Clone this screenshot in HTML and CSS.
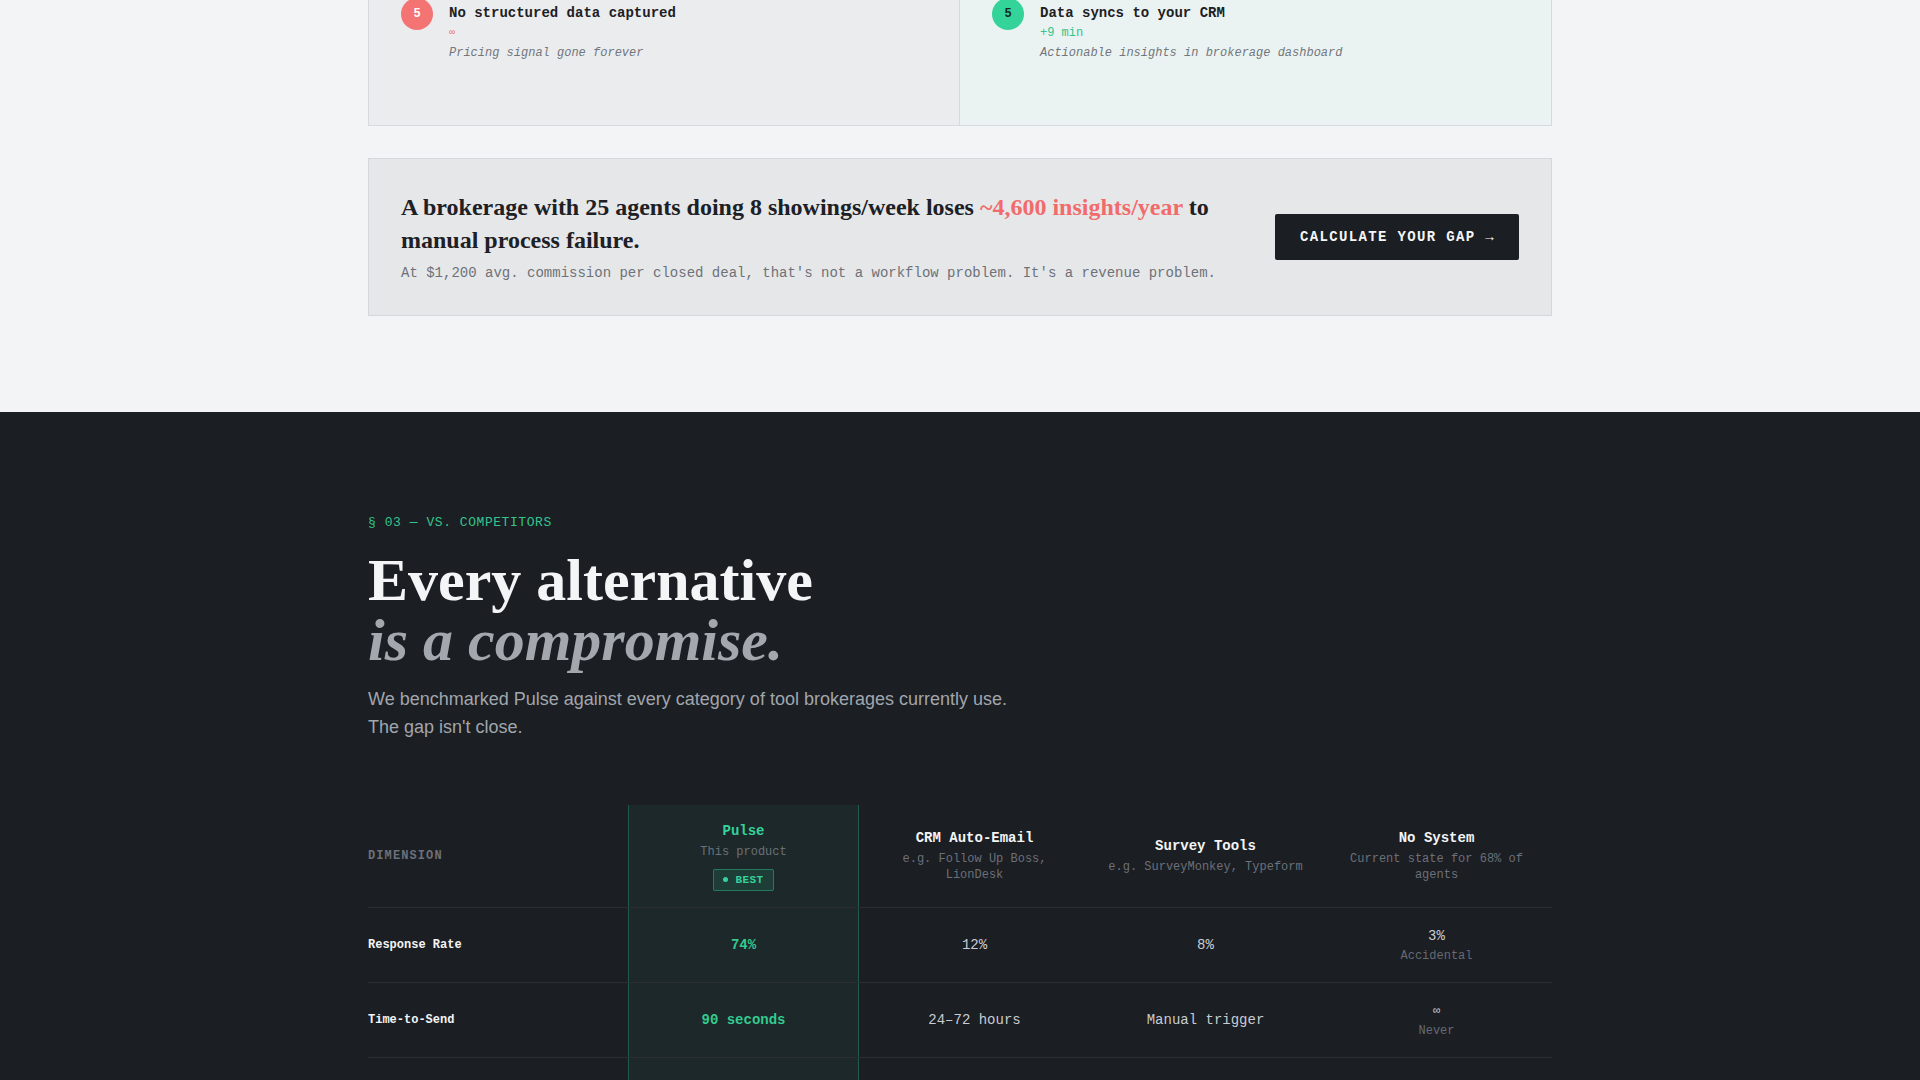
FILE: index.html
```html
<!DOCTYPE html>
<html lang="en">
<head>
<meta charset="utf-8">
<title>Pulse — Comparison</title>
<link rel="stylesheet" href="styles.css">
</head>
<body>
<section class="problem">
  <div class="container">
    <div class="flow">
      <div class="flow-col flow-manual">
        <div class="step">
          <span class="step-num num-bad">5</span>
          <div class="step-body">
            <div class="step-title">No structured data captured</div>
            <div class="step-time time-bad">∞</div>
            <div class="step-desc">Pricing signal gone forever</div>
          </div>
        </div>
      </div>
      <div class="flow-col flow-pulse">
        <div class="step">
          <span class="step-num num-good">5</span>
          <div class="step-body">
            <div class="step-title">Data syncs to your CRM</div>
            <div class="step-time time-good">+9 min</div>
            <div class="step-desc">Actionable insights in brokerage dashboard</div>
          </div>
        </div>
      </div>
    </div>

    <div class="callout">
      <div class="callout-text">
        <h3 class="callout-title">A brokerage with 25 agents doing 8 showings/week loses <span class="loss">~4,600 insights/year</span> to manual process failure.</h3>
        <p class="callout-sub">At $1,200 avg. commission per closed deal, that's not a workflow problem. It's a revenue problem.</p>
      </div>
      <a class="btn-dark" href="#">Calculate your gap →</a>
    </div>
  </div>
</section>

<section class="competitors">
  <div class="container">
    <div class="eyebrow">§ 03 — VS. COMPETITORS</div>
    <h2 class="headline">Every alternative<br><em>is a compromise.</em></h2>
    <p class="lede">We benchmarked Pulse against every category of tool brokerages currently use.<br>The gap isn't close.</p>

    <div class="cmp">
      <div class="cmp-row cmp-head">
        <div class="cmp-cell cmp-dim"><span class="dim-label">DIMENSION</span></div>
        <div class="cmp-cell cmp-pulse">
          <div class="col-name col-name-pulse">Pulse</div>
          <div class="col-sub">This product</div>
          <span class="badge-best"><span class="badge-dot"></span>BEST</span>
        </div>
        <div class="cmp-cell">
          <div class="col-name">CRM Auto-Email</div>
          <div class="col-sub">e.g. Follow Up Boss, LionDesk</div>
        </div>
        <div class="cmp-cell">
          <div class="col-name">Survey Tools</div>
          <div class="col-sub">e.g. SurveyMonkey, Typeform</div>
        </div>
        <div class="cmp-cell">
          <div class="col-name">No System</div>
          <div class="col-sub">Current state for 68% of agents</div>
        </div>
      </div>

      <div class="cmp-row">
        <div class="cmp-cell cmp-dim"><span class="row-label">Response Rate</span></div>
        <div class="cmp-cell cmp-pulse"><span class="val-win">74%</span></div>
        <div class="cmp-cell"><span class="val">12%</span></div>
        <div class="cmp-cell"><span class="val">8%</span></div>
        <div class="cmp-cell"><span class="val">3%</span><span class="val-note">Accidental</span></div>
      </div>

      <div class="cmp-row">
        <div class="cmp-cell cmp-dim"><span class="row-label">Time-to-Send</span></div>
        <div class="cmp-cell cmp-pulse"><span class="val-win">90 seconds</span></div>
        <div class="cmp-cell"><span class="val">24–72 hours</span></div>
        <div class="cmp-cell"><span class="val">Manual trigger</span></div>
        <div class="cmp-cell"><span class="val val-inf">∞</span><span class="val-note">Never</span></div>
      </div>

      <div class="cmp-row">
        <div class="cmp-cell cmp-dim"><span class="row-label">Data Structure</span></div>
        <div class="cmp-cell cmp-pulse"><span class="val-win">Structured</span></div>
        <div class="cmp-cell"><span class="val">Free text</span></div>
        <div class="cmp-cell"><span class="val">Generic</span></div>
        <div class="cmp-cell"><span class="val">None</span></div>
      </div>
    </div>
  </div>
</section>
</body>
</html>
```

FILE: styles.css
```css
* { box-sizing: border-box; }

html, body {
  margin: 0;
  padding: 0;
}

body {
  background: #f3f4f6;
  color: #1f2328;
  font-family: "Liberation Sans", Arial, sans-serif;
}

.container {
  width: 1184px;
  margin: 0 auto;
}

/* ---------- light problem section ---------- */
.problem {
  background: #f3f4f6;
  padding-bottom: 96px;
}

.flow {
  display: grid;
  grid-template-columns: 1fr 1fr;
  border: 1px solid #d7d9dc;
  margin-top: -35px;
}

.flow-col {
  padding: 32px 32px 64px;
}

.flow-manual {
  background: #ebecee;
  border-right: 1px solid #d7d9dc;
}

.flow-pulse {
  background: #ebf3f2;
}

.step {
  display: flex;
  align-items: flex-start;
  gap: 16px;
}

.step-num {
  flex: 0 0 32px;
  width: 32px;
  height: 32px;
  border-radius: 50%;
  display: flex;
  align-items: center;
  justify-content: center;
  font-family: "Liberation Mono", "DejaVu Sans Mono", monospace;
  font-weight: 700;
  font-size: 12px;
}

.num-bad { background: #f47373; color: #ffffff; }
.num-good { background: #34d399; color: #12261f; }

.step-body {
  padding-top: 5px;
  font-family: "Liberation Mono", "DejaVu Sans Mono", monospace;
}

.step-title {
  font-size: 14px;
  line-height: 20px;
  font-weight: 700;
  color: #1d2024;
}

.step-time {
  margin-top: 2px;
  font-size: 12px;
  line-height: 16px;
}

.time-bad { color: #f07a7a; font-size: 10px; }
.time-good { color: #2fc58c; }

.step-desc {
  margin-top: 4px;
  font-size: 12px;
  line-height: 16px;
  font-style: italic;
  color: #72767d;
}

.callout {
  margin-top: 32px;
  background: #e6e7e9;
  border: 1px solid #d5d7da;
  padding: 32px;
  display: flex;
  align-items: center;
  gap: 40px;
}

.callout-text {
  flex: 1;
  min-width: 0;
}

.callout-title {
  margin: 0;
  font-family: "Liberation Serif", "Times New Roman", serif;
  font-weight: 700;
  font-size: 24px;
  line-height: 33px;
  color: #1d2024;
}

.loss { color: #f26b6b; }

.callout-sub {
  margin: 6px 0 0;
  font-family: "Liberation Mono", "DejaVu Sans Mono", monospace;
  font-size: 14px;
  line-height: 20px;
  color: #6e7278;
}

.btn-dark {
  flex: 0 0 auto;
  display: inline-block;
  background: #1b1e22;
  color: #f4f5f7;
  text-decoration: none;
  text-transform: uppercase;
  font-family: "Liberation Mono", "DejaVu Sans Mono", monospace;
  font-weight: 700;
  font-size: 14px;
  line-height: 16px;
  letter-spacing: 1.35px;
  padding: 15px 24px 15px 25px;
  border-radius: 2px;
}

/* ---------- dark competitors section ---------- */
.competitors {
  background: #1b1e22;
  color: #f3f4f6;
  padding: 103px 0 96px;
}

.eyebrow {
  font-family: "Liberation Mono", "DejaVu Sans Mono", monospace;
  font-size: 13px;
  line-height: 16px;
  letter-spacing: 0.55px;
  color: #34c48e;
}

.headline {
  margin: 19px 0 0;
  font-family: "Liberation Serif", "Times New Roman", serif;
  font-weight: 700;
  font-size: 60px;
  line-height: 60px;
  color: #f4f5f7;
}

.headline em {
  font-style: italic;
  color: #a3a7ae;
}

.lede {
  margin: 16px 0 0;
  font-family: "Liberation Sans", Arial, sans-serif;
  font-size: 18px;
  line-height: 27.5px;
  color: #a1a6ad;
}

/* ---------- comparison table ---------- */
.cmp {
  margin-top: 64px;
  font-family: "Liberation Mono", "DejaVu Sans Mono", monospace;
}

.cmp-row {
  display: grid;
  grid-template-columns: 260px repeat(4, 1fr);
  min-height: 75px;
  border-bottom: 1px solid #2b2f35;
}

.cmp-cell {
  display: flex;
  flex-direction: column;
  align-items: center;
  justify-content: center;
  text-align: center;
  padding: 0 16px;
}

.cmp-dim {
  align-items: flex-start;
  text-align: left;
  padding: 0;
}

.cmp-pulse {
  background: rgba(52, 211, 153, 0.06);
  border-left: 1px solid rgba(52, 211, 153, 0.3);
  border-right: 1px solid rgba(52, 211, 153, 0.3);
}

.cmp-head .cmp-pulse {
  padding-top: 16px;
  padding-bottom: 16px;
}

.dim-label {
  font-size: 12px;
  line-height: 16px;
  font-weight: 700;
  letter-spacing: 1.1px;
  color: #6b7079;
}

.col-name {
  font-size: 14px;
  line-height: 20px;
  font-weight: 700;
  color: #f3f4f6;
}

.col-name-pulse { color: #34d399; }

.col-sub {
  margin-top: 4px;
  font-size: 12px;
  line-height: 15.5px;
  color: #6b7079;
}

.badge-best {
  margin-top: 8px;
  display: inline-flex;
  align-items: center;
  height: 22px;
  padding: 0 9px;
  border: 1px solid rgba(52, 211, 153, 0.4);
  background: rgba(52, 211, 153, 0.12);
  border-radius: 2px;
  color: #34d399;
  font-size: 11px;
  font-weight: 700;
  letter-spacing: 0.4px;
}

.badge-dot {
  width: 5px;
  height: 5px;
  border-radius: 50%;
  background: #34d399;
  margin-right: 7px;
}

.row-label {
  font-size: 12px;
  line-height: 16px;
  font-weight: 700;
  color: #f3f4f6;
}

.val-win {
  font-size: 14px;
  line-height: 20px;
  font-weight: 700;
  color: #34c98f;
}

.val {
  font-size: 14px;
  line-height: 20px;
  color: #c8ccd2;
}

.val-inf { font-size: 12px; }

.val-note {
  margin-top: 2px;
  font-size: 12px;
  line-height: 16px;
  color: #656a73;
}
```
